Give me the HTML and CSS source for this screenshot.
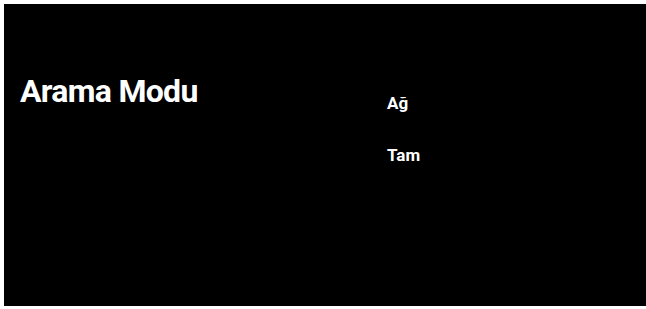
FILE: index.html
```
<!DOCTYPE html>
<html lang="tr">
<head>
<meta charset="utf-8">
<link rel="stylesheet" href="styles.css">
</head>
<body>
<div class="screen">
  <h1 class="title">Arama Modu</h1>
  <ul class="options">
    <li class="option">Ağ</li>
    <li class="option">Tam</li>
  </ul>
</div>
</body>
</html>
```
FILE: styles.css
```
html, body {
  margin: 0;
  padding: 0;
  background: #ffffff;
}
body {
  padding: 4px 0 3px 4px;
  font-family: Roboto, "Liberation Sans", sans-serif;
}
.screen {
  background: #000000;
  height: 302px;
  display: flex;
  box-sizing: border-box;
  padding: 0 0 0 16px;
}
.title {
  margin: 0;
  padding-top: 65px;
  width: 367px;
  color: #ffffff;
  font-size: 32px;
  font-weight: 700;
  line-height: 44px;
  letter-spacing: -0.7px;
}
.options {
  list-style: none;
  margin: 0;
  padding: 89px 0 0 0;
}
.option {
  color: #ffffff;
  font-size: 17px;
  font-weight: 700;
  line-height: 20px;
  margin-bottom: 32px;
}
```
